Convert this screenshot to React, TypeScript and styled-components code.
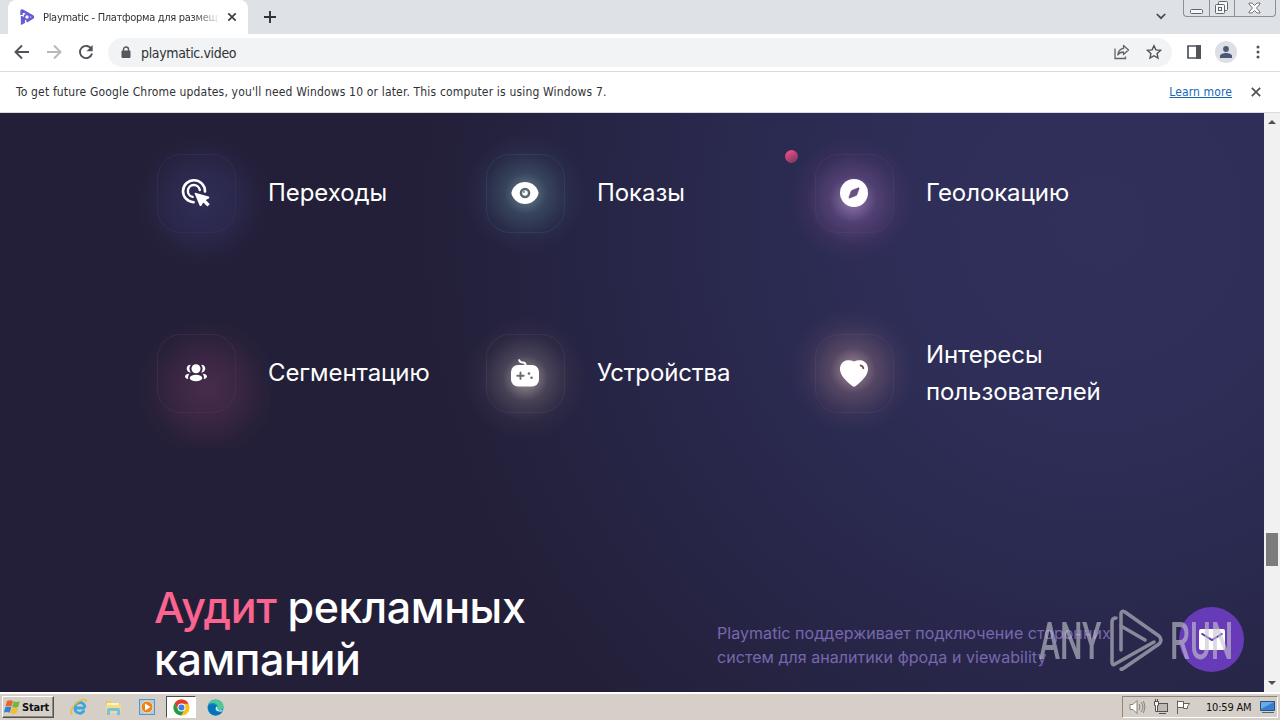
import type { ReactNode } from "react";
import styled, { createGlobalStyle } from "styled-components";

type Feature = {
  title: string;
  glow: string;
  border: string;
  icon: ReactNode;
};

const ClickIcon = () => (
  <svg width="30" height="30" viewBox="0 0 30 30" fill="none">
    <path d="M12.6 24.2A11 11 0 1 1 24 13.4" stroke="#fff" strokeWidth="2.6" strokeLinecap="round" />
    <path d="M11.6 18.9A6 6 0 1 1 18.8 12" stroke="#fff" strokeWidth="2.4" strokeLinecap="round" />
    <path d="M14.3 14.8l13.3 3.8c1 .3 1 1.4.2 1.8l-3 1.7 4 4.1-2.4 2.4-4.1-4-1.8 3c-.5.8-1.6.6-1.9-.2l-4.9-11.7c-.2-.6.1-1 .6-.9z" fill="#fff" />
  </svg>
);

const EyeIcon = () => (
  <svg width="28" height="24" viewBox="0 0 28 24">
    <path fill="#fff" d="M14 1C7.600 1 2.900 5 1 9.700c-.7 1.600-.7 3 0 4.600C2.900 19 7.600 23 14 23s11.100-4 13-8.700c.7-1.600.7-3 0-4.600C25.100 5 20.400 1 14 1z" />
    <circle cx="14" cy="12" r="5.300" fill="#596773" />
    <circle cx="14" cy="12" r="2.800" fill="#fff" />
    <circle cx="12.800" cy="10.700" r="1.300" fill="#8b959d" />
  </svg>
);

const CompassIcon = () => (
  <svg width="28" height="28" viewBox="0 0 28 28">
    <circle cx="14" cy="14" r="14" fill="#fff" />
    <path d="M18.300 8.800c.6-.2 1 .2.800.8l-2.300 6.300c-.1.300-.3.500-.6.600l-6.400 2.600c-.6.200-1-.2-.8-.8l2.200-6.300c.1-.3.300-.5.600-.6z" fill="#665084" stroke="#665084" strokeWidth=".6" />
  </svg>
);

const PeopleIcon = () => (
  <svg width="22" height="18" viewBox="0 0 22 18" fill="#fff">
    <circle cx="11" cy="4.800" r="4.500" />
    <path d="M5.800.7C3.400.6 1.700 2.300 1.700 4.600s1.700 4.100 4.200 4a6.600 6.600 0 0 1-.1-7.900zM16.200.7c2.400-.1 4.100 1.600 4.100 3.900s-1.700 4.100-4.200 4a6.600 6.600 0 0 0 .1-7.900z" />
    <ellipse cx="11" cy="14" rx="6.300" ry="3.200" />
    <path d="M4.400 9.700C1.800 9.700 0 10.900 0 12.500c0 1.200 1.200 2.200 3.200 2.500-.4-2 0-3.800 1.200-5.300zM17.600 9.700c2.600 0 4.400 1.200 4.400 2.800 0 1.200-1.200 2.200-3.200 2.500.4-2 0-3.800-1.200-5.300z" />
  </svg>
);

const GamepadIcon = () => (
  <svg width="28" height="28" viewBox="0 0 28 28">
    <path d="M8.300 1.200c.5 2 2 2.300 3.700 2.400 2 .1 2.700.9 2.700 3.200" stroke="#fff" strokeWidth="2" fill="none" strokeLinecap="round" />
    <rect x="0" y="6" width="28" height="21.500" rx="7" fill="#fff" />
    <path d="M9.500 13.500v6.400M6.300 16.700h6.400" stroke="#6f6a73" strokeWidth="1.900" strokeLinecap="round" />
    <circle cx="18" cy="14.500" r="1.300" fill="#6f6a73" />
    <circle cx="20.500" cy="18.800" r="1.300" fill="#6f6a73" />
  </svg>
);

const HeartIcon = () => (
  <svg width="28" height="27" viewBox="0 0 28 27">
    <path fill="#fff" d="M14 1.500C11.900.4 9.700 0 7.400.2 3 .6 0 4.300 0 9c0 5.500 4.500 10.700 12.300 17 1 .9 2.400.9 3.400 0C23.500 19.700 28 14.500 28 9c0-4.700-3-8.400-7.400-8.800C18.300 0 16.100.4 14 1.500z" />
    <path d="M20.800 5.600c1.600.3 2.300 1.200 2.500 2.600" stroke="#6d4f63" strokeWidth="2" fill="none" strokeLinecap="round" />
  </svg>
);

const features: Feature[] = [
  {
    title: "Переходы",
    border: "rgba(128, 112, 190, 0.15)",
    glow: "radial-gradient(circle at 54% 55%, rgba(56, 54, 104, .65), rgba(50, 49, 96, .5) 28%, rgba(50, 49, 96, .12) 48%, transparent 60%)",
    icon: <ClickIcon />,
  },
  {
    title: "Показы",
    border: "rgba(91, 140, 170, 0.18)",
    glow: "radial-gradient(circle at 50% 50%, rgba(135, 160, 175, .75), rgba(75, 108, 125, .45) 20%, rgba(60, 85, 110, .16) 40%, transparent 57%)",
    icon: <EyeIcon />,
  },
  {
    title: "Геолокацию",
    border: "rgba(140, 95, 170, 0.16)",
    glow: "radial-gradient(circle at 49% 54%, rgba(185, 150, 208, .75), rgba(120, 85, 145, .48) 21%, rgba(98, 58, 118, .18) 42%, transparent 57%)",
    icon: <CompassIcon />,
  },
  {
    title: "Сегментацию",
    border: "rgba(150, 100, 160, 0.17)",
    glow: "radial-gradient(circle at 57% 60%, rgba(90, 52, 86, .65), rgba(82, 46, 79, .48) 26%, rgba(76, 42, 73, .12) 47%, transparent 59%)",
    icon: <PeopleIcon />,
  },
  {
    title: "Устройства",
    border: "rgba(130, 110, 150, 0.17)",
    glow: "radial-gradient(circle at 50% 53%, rgba(190, 180, 180, .8), rgba(108, 98, 110, .5) 21%, rgba(85, 74, 88, .17) 40%, transparent 57%)",
    icon: <GamepadIcon />,
  },
  {
    title: "Интересы пользователей",
    border: "rgba(155, 105, 140, 0.16)",
    glow: "radial-gradient(circle at 49% 48%, rgba(195, 165, 172, .8), rgba(125, 98, 116, .5) 21%, rgba(96, 72, 100, .2) 42%, transparent 58%)",
    icon: <HeartIcon />,
  },
];

const App = () => (
  <Screen>
    <Global />
    <TabStrip>
      <Tab>
        <svg width="15" height="16" viewBox="0 0 15 16" fill="none" stroke="#655bd6">
          <path d="M1.500 6V2.200q0-1.200 1-.6l10 5.600q1 .8 0 1.600l-6 3.700" strokeWidth="2.400" />
          <circle cx="7" cy="8" r="2.500" strokeWidth="1.600" />
          <path d="M4.300 8v5.500L1.500 15V7" strokeWidth="1.300" fill="#655bd6" />
        </svg>
        <TabTitle>Playmatic - Платформа для размещ</TabTitle>
        <svg width="10" height="10" viewBox="0 0 10 10">
          <path d="M1.300 1.300l7.400 7.400M8.700 1.300L1.300 8.700" stroke="#3c4043" strokeWidth="1.700" />
        </svg>
      </Tab>
      <NewTab>
        <svg width="12" height="12" viewBox="0 0 12 12">
          <path d="M6 0v12M0 6h12" stroke="#303236" strokeWidth="1.900" />
        </svg>
      </NewTab>
      <TabSearch>
        <svg width="10" height="7" viewBox="0 0 10 7">
          <path d="M.8 1L5 5.200 9.200 1" stroke="#45484c" strokeWidth="1.700" fill="none" />
        </svg>
      </TabSearch>
      <WindowButtons>
        <WindowButton $width={25}>
          <svg width="13" height="5"><rect x=".5" y=".5" width="12" height="4" rx="1" fill="#f6f7f8" stroke="#60646b" /></svg>
        </WindowButton>
        <WindowButton $width={25}>
          <svg width="13" height="13" viewBox="0 0 13 13" fill="#f6f7f8" stroke="#60646b">
            <rect x="3.500" y=".5" width="9" height="9" rx="1" />
            <rect x=".5" y="3.500" width="9" height="9" rx="1" />
            <rect x="3.500" y="6.500" width="3" height="3" />
          </svg>
        </WindowButton>
        <WindowButton $width={41}>
          <svg width="13" height="12" viewBox="0 0 13 12">
            <path d="M1 1h3l2.500 2.500L9 1h3v1L8.500 6l3.500 4v1H9L6.500 8.500 4 11H1v-1l3.500-4L1 2z" fill="#fafafa" stroke="#70747a" />
          </svg>
        </WindowButton>
      </WindowButtons>
    </TabStrip>

    <Toolbar>
      <NavButtons>
        <svg width="16" height="16" viewBox="0 0 16 16" fill="none" stroke="#4f5358" strokeWidth="1.900">
          <path d="M15 8H2M8 1.500L1.500 8 8 14.500" />
        </svg>
        <svg width="16" height="16" viewBox="0 0 16 16" fill="none" stroke="#b6b8bb" strokeWidth="1.900">
          <path d="M1 8h13M8 1.500L14.500 8 8 14.500" />
        </svg>
        <svg width="16" height="16" viewBox="0 0 16 16" fill="none">
          <path d="M13.400 5A6.100 6.100 0 1 0 14 9.500" stroke="#4f5358" strokeWidth="1.900" />
          <path d="M14.700 1v6.200H8.500z" fill="#4f5358" />
        </svg>
      </NavButtons>
      <AddressBar>
        <svg width="10" height="13" viewBox="0 0 10 13">
          <rect x=".5" y="4.500" width="9" height="7.500" rx="1" fill="#54585d" />
          <path d="M2.500 5V3.500a2.500 2.500 0 0 1 5 0V5" stroke="#54585d" strokeWidth="1.400" fill="none" />
        </svg>
        <Url>playmatic.video</Url>
        <svg width="16" height="16" viewBox="0 0 16 16" fill="none" stroke="#606469" strokeWidth="1.300">
          <path d="M1 4.500v10h10.500v-2" />
          <path d="M9.500 1.500L14.500 6l-5 4.500V8C6.500 8 5 9 3.800 11c.3-3.700 2.300-6 5.700-6.600z" strokeLinejoin="round" />
        </svg>
        <svg width="16" height="16" viewBox="0 0 16 16">
          <path d="M8 1.700l1.900 4.200 4.600.5-3.400 3.100.9 4.600-4-2.400-4 2.400.9-4.600L1.500 6.400l4.600-.5z" fill="none" stroke="#505459" strokeWidth="1.400" />
        </svg>
      </AddressBar>
      <ToolbarActions>
        <svg width="14" height="14" viewBox="0 0 14 14">
          <path d="M1 1h12v12H1z" fill="none" stroke="#505459" strokeWidth="1.700" />
          <path d="M9 0h5v14H9z" fill="#505459" />
        </svg>
        <Avatar>
          <svg width="12" height="12" viewBox="0 0 12 12" fill="#4b5878">
            <circle cx="6" cy="3" r="2.900" />
            <path d="M0 12v-2c0-2 3.500-3 6-3s6 1 6 3v2z" />
          </svg>
        </Avatar>
        <svg width="4" height="14" viewBox="0 0 4 14" fill="#505459">
          <circle cx="2" cy="2" r="1.500" /><circle cx="2" cy="7" r="1.500" /><circle cx="2" cy="12" r="1.500" />
        </svg>
      </ToolbarActions>
    </Toolbar>

    <InfoBar>
      <InfoText>To get future Google Chrome updates, you'll need Windows 10 or later. This computer is using Windows 7.</InfoText>
      <LearnMore>Learn more</LearnMore>
      <svg width="10" height="10" viewBox="0 0 10 10">
        <path d="M.8.8l8.400 8.400M9.200.8L.8 9.200" stroke="#505459" strokeWidth="1.700" />
      </svg>
    </InfoBar>

    <Viewport>
      <Page>
        <FeatureGrid>
          {features.map((feature) => (
            <FeatureItem key={feature.title}>
              <FeatureBox $border={feature.border} $glow={feature.glow}>{feature.icon}</FeatureBox>
              <FeatureTitle>{feature.title}</FeatureTitle>
            </FeatureItem>
          ))}
        </FeatureGrid>
        <Audit>
          <Heading><Accent>Аудит</Accent> рекламных кампаний</Heading>
          <Description>Playmatic поддерживает подключение сторонних систем для аналитики фрода и viewability</Description>
        </Audit>
        <Dot />
        <ChatButton>
          <svg width="26" height="21" viewBox="0 0 26 21">
            <rect width="26" height="21" rx="2" fill="#fff" />
            <path d="M2.500 4.500L13 11l10.500-6.500" stroke="#5e35b1" strokeWidth="2" fill="none" />
          </svg>
        </ChatButton>
        <Watermark>
          <WatermarkWord>ANY</WatermarkWord>
          <svg width="56" height="64" viewBox="0 0 56 64" fill="none" stroke="currentColor" strokeWidth="3.500" strokeLinecap="round" strokeLinejoin="round">
            <path d="M7 9Q3 9 3 13V53Q3 57 6 55L45 33" />
            <path d="M12 41V5Q12 1 16 3L50 27Q54 31 50 35L15 59Q12 61 12 60" />
            <path d="M12 17L36 31" />
          </svg>
          <WatermarkWord>RUN</WatermarkWord>
        </Watermark>
      </Page>
      <Scrollbar>
        <svg width="8" height="4"><path d="M0 4l4-4 4 4z" fill="#505050" /></svg>
        <Thumb />
        <svg width="8" height="4"><path d="M0 0l4 4 4-4z" fill="#505050" /></svg>
      </Scrollbar>
    </Viewport>

    <Taskbar>
      <StartButton>
        <svg width="17" height="16" viewBox="0 0 17 16">
          <path d="M3 2c2-1 4-1 6 0L7.500 7.500c-2-1-4-1-6 0z" fill="#e9652b" />
          <path d="M9.700 2.300c2 1 4 1 6 0L14.200 8c-2 1-4 1-6 0z" fill="#72b73b" />
          <path d="M1.300 8.200c2-1 4-1 6 0l-1.500 5.500c-2-1-4-1-6 0z" fill="#3980cf" />
          <path d="M8 8.700c2 1 4 1 6 0l-1.500 5.500c-2 1-4 1-6 0z" fill="#f5bd2b" />
        </svg>
        Start
      </StartButton>
      <QuickLaunch>
        <TaskItem>
          <svg width="18" height="18" viewBox="0 0 18 18" fill="none">
            <path d="M15 10H5a4.700 4.700 0 0 0 9 2.300M5 9.500a5 5 0 0 1 10 0" stroke="#3ba5dc" strokeWidth="2.800" />
            <path d="M2.200 16.500C-1.500 14 4 6 9.500 3c4-2.200 7-2 6.700.8" stroke="#e8bd38" strokeWidth="1.500" />
          </svg>
        </TaskItem>
        <TaskItem>
          <svg width="17" height="17" viewBox="0 0 17 17">
            <path d="M1 2h5l1 2h8v9H1z" fill="#e5c96a" />
            <path d="M2 4h12v4H2z" fill="#fff4b8" />
            <path d="M1 6h15v8H1z" fill="#f2dc87" />
            <path d="M2 16v-5q0-2 2-2h9q2 0 2 2v5h-3v-4H5v4z" fill="#78bfe0" />
          </svg>
        </TaskItem>
        <TaskItem>
          <svg width="16" height="16" viewBox="0 0 16 16">
            <rect x=".5" y=".5" width="15" height="15" fill="#a9cce9" stroke="#5795c8" />
            <circle cx="8" cy="8" r="6" fill="#ed8519" stroke="#fae2bb" />
            <path d="M6 4.500v7L11.500 8z" fill="#fff" />
          </svg>
        </TaskItem>
        <TaskItem $active>
          <svg width="17" height="17" viewBox="0 0 18 18">
            <circle cx="9" cy="9" r="8.500" fill="#fbc116" />
            <path d="M1.600 4.700A8.500 8.500 0 0 1 16.400 5H9a4 4 0 0 0-3.500 6z" fill="#e33b2e" />
            <path d="M1.600 4.700A8.500 8.500 0 0 0 8.600 17.500L12.500 11A4 4 0 0 1 5.500 11z" fill="#229b50" />
            <circle cx="9" cy="9" r="4.200" fill="#fff" />
            <circle cx="9" cy="9" r="3.200" fill="#397fe7" />
          </svg>
        </TaskItem>
        <TaskItem>
          <svg width="17" height="17" viewBox="0 0 18 18">
            <circle cx="9" cy="9" r="8.500" fill="#168bd0" />
            <path d="M1 6C3 0 12-1 16 4c3 4 1 8-3 8-3 0-3-2-2-3 1-5-6-6-10-3z" fill="#4acb94" />
            <path d="M1 9c0-4 7-5 9-1-3 2-2 7 6 6-3 4-10 5-13 0z" fill="#0873bb" />
            <path d="M10 8c-2 3 0 6 6 5 1-1 0-1 0-1-4 1-6-1-5-3z" fill="#e7f3f2" />
          </svg>
        </TaskItem>
      </QuickLaunch>
      <Tray>
        <svg width="17" height="16" viewBox="0 0 17 16" fill="none" stroke="#85827e">
          <path d="M1 5.500h3L8 1.500v13l-4-4H1z" fill="#fff" />
          <path d="M10 5q2 3 0 6M12 3q4 5 0 10M14.500 2q3 6 0 12" />
        </svg>
        <svg width="16" height="16" viewBox="0 0 16 16" fill="#f7f5f1" stroke="#55524f">
          <rect x="4.500" y="4.500" width="10" height="8" fill="#bdb9b3" />
          <path d="M1.500 2.500v4h1v6h2v-6h1v-4zM2.500 0v3M4.500 0v3M6 14.500h7" />
        </svg>
        <svg width="15" height="16" viewBox="0 0 15 16" fill="#fff" stroke="#65625e">
          <path d="M1.500 15V1.500M1.500 2.500h6v6h-6M7.500 4.500h6l-2 3v2h-4z" />
        </svg>
        <Clock>10:59 AM</Clock>
        <svg width="15" height="13" viewBox="0 0 15 13">
          <path d="M.5.500h14v9H.5z" fill="#347fd1" stroke="#2a527e" />
          <path d="M1 1h13L1 8z" fill="#69aae8" />
          <path d="M2 11.500h12" stroke="#49647e" />
        </svg>
      </Tray>
    </Taskbar>
  </Screen>
);

export default App;

const Global = createGlobalStyle`
  * { box-sizing: border-box; }
  body { margin: 0; overflow: hidden; }
  svg { display: block; flex-shrink: 0; }
`;

const Screen = styled.div`
  width: 1280px;
  height: 720px;
  display: flex;
  flex-direction: column;
  background: #fff;
  font-family: "DejaVu Sans Condensed", "DejaVu Sans", sans-serif;
  color: #303236;
`;

const TabStrip = styled.div`
  height: 34px;
  display: flex;
  align-items: flex-start;
  background: #dee1e6;
  padding-left: 8px;
`;

const Tab = styled.div`
  width: 240px;
  height: 34px;
  padding: 0 11px 0 12px;
  display: flex;
  align-items: center;
  background: #fff;
  border-radius: 8px 8px 0 0;
`;

const TabTitle = styled.div`
  width: 176px;
  margin: 0 9px 0 8px;
  white-space: nowrap;
  font-size: 11px;
  letter-spacing: -0.3px;
  mask-image: linear-gradient(90deg, #000 86%, transparent 102%);
`;

const NewTab = styled.div`
  padding: 11px 0 0 16px;
`;

const TabSearch = styled.div`
  margin-left: auto;
  padding: 13px 17px 0 0;
`;

const WindowButtons = styled.div`
  display: flex;
  height: 17px;
  margin-right: 4px;
  border: 1px solid #8b8f96;
  border-top: 0;
  border-radius: 0 0 4px 4px;
`;

const WindowButton = styled.div<{ $width: number }>`
  width: ${({ $width }) => $width}px;
  display: flex;
  justify-content: center;
  align-items: flex-end;
  padding: 0 1px 2px 0;
  & + & {
    border-left: 1px solid #8b8f96;
  }
`;

const Toolbar = styled.div`
  height: 38px;
  display: flex;
  align-items: center;
  padding: 0 0 1px 14px;
  border-bottom: 1px solid #d9dbde;
`;

const NavButtons = styled.div`
  width: 94px;
  display: flex;
  gap: 16px;
`;

const AddressBar = styled.div`
  width: 1064px;
  height: 29px;
  display: flex;
  align-items: center;
  gap: 16px;
  padding: 0 10px 0 13px;
  border-radius: 15px;
  background: #f1f3f4;
`;

const Url = styled.div`
  flex: 1;
  margin-left: -6px;
  padding-top: 1px;
  font-size: 14px;
  letter-spacing: -0.35px;
`;

const ToolbarActions = styled.div`
  display: flex;
  align-items: center;
  padding-left: 15px;
`;

const Avatar = styled.div`
  width: 22px;
  height: 22px;
  display: flex;
  align-items: center;
  justify-content: center;
  margin: 0 19px 0 14px;
  border-radius: 50%;
  background: #dce0e6;
`;

const InfoBar = styled.div`
  height: 41px;
  display: flex;
  align-items: center;
  padding: 0 19px 0 16px;
  border-bottom: 1px solid #d9dbde;
  font-size: 12px;
  white-space: nowrap;
`;

const InfoText = styled.div`
  flex: 1;
  letter-spacing: 0.165px;
`;

const LearnMore = styled.div`
  margin-right: 19px;
  color: #1967b8;
  text-decoration: underline;
  letter-spacing: 0.12px;
`;

const Viewport = styled.div`
  height: 579px;
  display: flex;
`;

const Page = styled.main`
  position: relative;
  width: 1264px;
  overflow: hidden;
  padding: 41px 0 0 157px;
  background: radial-gradient(circle 690px at 1100px 110px, #30305a 0%, #2e2e58 28%, #28274a 65%, #231f38 100%);
  font-family: Inter, sans-serif;
  color: #fff;
`;

const FeatureGrid = styled.div`
  display: grid;
  grid-template-columns: repeat(3, 329px);
  grid-auto-rows: 79px;
  row-gap: 101px;
`;

const FeatureItem = styled.div`
  display: flex;
  align-items: center;
  gap: 32px;
`;

const FeatureBox = styled.div<{ $border: string; $glow: string }>`
  position: relative;
  isolation: isolate;
  width: 79px;
  height: 79px;
  flex-shrink: 0;
  display: flex;
  align-items: center;
  justify-content: center;
  padding: 0 1px 1px 0;
  border: 1px solid ${({ $border }) => $border};
  border-radius: 24px;
  &::before {
    content: "";
    position: absolute;
    z-index: -1;
    inset: -36px;
    background: ${({ $glow }) => $glow};
  }
`;

const FeatureTitle = styled.div`
  width: 190px;
  padding-bottom: 2px;
  font-size: 24px;
  line-height: 37px;
  letter-spacing: -0.08px;
`;

const Audit = styled.section`
  display: flex;
  margin: 168px 0 0 -3px;
`;

const Heading = styled.h2`
  width: 563px;
  margin: 0;
  padding-right: 150px;
  font-size: 43px;
  line-height: 52px;
  font-weight: 500;
  letter-spacing: -0.4px;
`;

const Accent = styled.span`
  color: #fa648f;
`;

const Description = styled.p`
  width: 410px;
  margin: 40px 0 0;
  font-size: 16px;
  line-height: 24px;
  letter-spacing: 0.05px;
  color: #7767ae;
`;

const Dot = styled.div`
  position: absolute;
  left: 785px;
  top: 37px;
  width: 13px;
  height: 13px;
  border-radius: 50%;
  background: linear-gradient(150deg, #dc4a80 25%, #65365d);
`;

const ChatButton = styled.div`
  position: absolute;
  right: 20px;
  bottom: 20px;
  width: 65px;
  height: 65px;
  display: flex;
  align-items: center;
  justify-content: center;
  border-radius: 50%;
  background: #673ab7;
`;

const Watermark = styled.div`
  position: absolute;
  left: 1039px;
  top: 496px;
  height: 64px;
  display: flex;
  align-items: center;
  gap: 5px;
  color: #c5c5ce;
  opacity: 0.62;
`;

const WatermarkWord = styled.div`
  width: 65px;
  padding-top: 2px;
  font-family: Roboto, sans-serif;
  font-size: 52px;
  font-weight: 500;
  line-height: 64px;
  transform: scaleX(0.61);
  transform-origin: left;
`;

const Scrollbar = styled.div`
  width: 16px;
  display: flex;
  flex-direction: column;
  align-items: center;
  padding: 7px 0;
  background: #f1f1f1;
`;

const Thumb = styled.div`
  width: 12px;
  height: 33px;
  margin: 409px 0 auto;
  background: #7c7c7c;
`;

const Taskbar = styled.div`
  height: 28px;
  display: flex;
  align-items: center;
  padding: 0 2px;
  border-top: 2px solid #fff;
  background: #d5cfc7;
`;

const StartButton = styled.div`
  width: 52px;
  height: 22px;
  display: flex;
  align-items: center;
  gap: 1px;
  padding-left: 1px;
  border: 1px solid;
  border-color: #fff #55514d #55514d #fff;
  box-shadow: inset -1px -1px #8e8983;
  color: #111;
  font-size: 11px;
  font-weight: bold;
  letter-spacing: -0.2px;
`;

const QuickLaunch = styled.div`
  display: flex;
  gap: 4px;
  margin-left: 10px;
`;

const TaskItem = styled.div<{ $active?: boolean }>`
  width: 30px;
  height: 22px;
  display: flex;
  align-items: center;
  justify-content: center;
  border: 1px solid;
  border-color: ${({ $active }) => ($active ? "#4e4a46 #fff #fff #4e4a46" : "transparent")};
  background: ${({ $active }) => ($active ? "#fff" : "transparent")};
`;

const Tray = styled.div`
  width: 156px;
  height: 22px;
  display: flex;
  align-items: center;
  gap: 7px;
  margin-left: auto;
  padding-left: 6px;
  border: 1px solid;
  border-color: #8c8781 #fff #fff #8c8781;
`;

const Clock = styled.div`
  margin-left: 8px;
  width: 47px;
  white-space: nowrap;
  color: #111;
  font-size: 11px;
  letter-spacing: -0.2px;
`;
